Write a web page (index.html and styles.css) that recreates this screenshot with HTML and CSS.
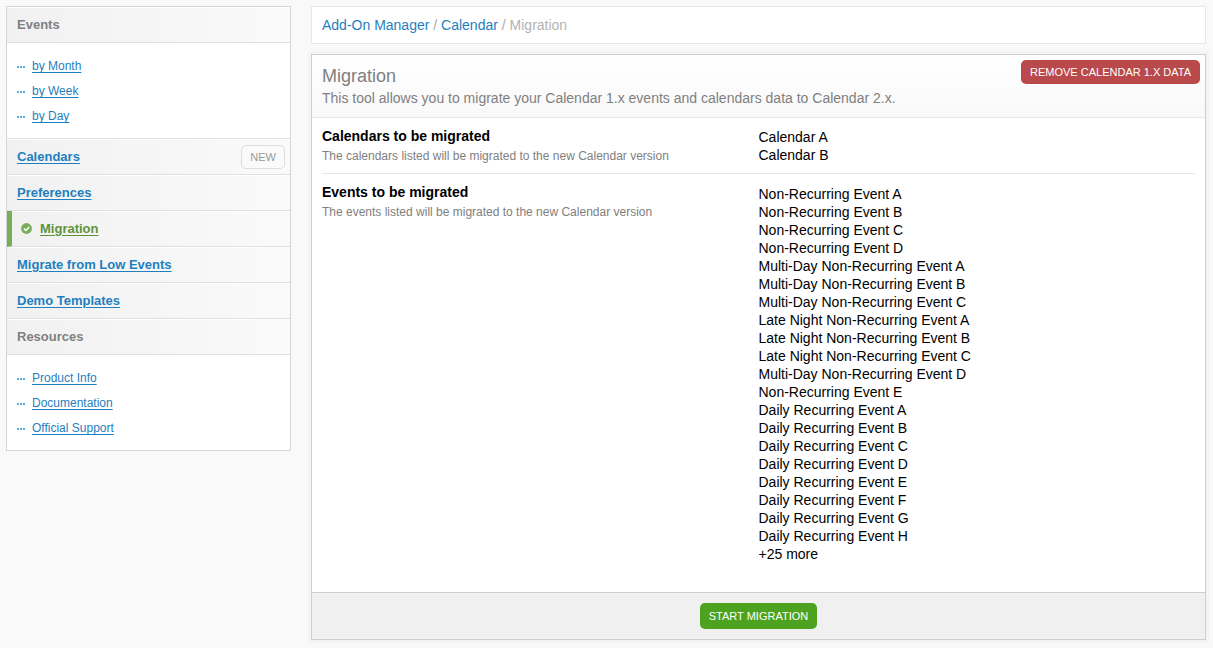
FILE: index.html
```html
<!DOCTYPE html>
<html lang="en">
<head>
<meta charset="utf-8">
<meta name="viewport" content="width=device-width, initial-scale=1">
<title>Migration - Calendar</title>
<link rel="stylesheet" href="styles.css">
</head>
<body>
<div class="layout">
  <nav class="sidebar" aria-label="Calendar">
    <h2 class="side-head">Events</h2>
    <ul class="side-list">
      <li><a href="#">by Month</a></li>
      <li><a href="#">by Week</a></li>
      <li><a href="#">by Day</a></li>
    </ul>
    <h2 class="side-head"><a href="#">Calendars</a><a class="new" href="#">NEW</a></h2>
    <h2 class="side-head"><a href="#">Preferences</a></h2>
    <h2 class="side-head active">
      <svg class="check" viewBox="0 0 11 11" aria-hidden="true"><circle cx="5.5" cy="5.5" r="5.4" fill="#78ae57"/><path d="M3 5.5l1.9 1.9 3.3-3.4" fill="none" stroke="#fff" stroke-width="1.5"/></svg>
      <a href="#" aria-current="page">Migration</a>
    </h2>
    <h2 class="side-head"><a href="#">Migrate from Low Events</a></h2>
    <h2 class="side-head"><a href="#">Demo Templates</a></h2>
    <h2 class="side-head">Resources</h2>
    <ul class="side-list">
      <li><a href="#">Product Info</a></li>
      <li><a href="#">Documentation</a></li>
      <li><a href="#">Official Support</a></li>
    </ul>
  </nav>
  <main class="main">
    <nav class="breadcrumb" aria-label="Breadcrumb"><a href="#">Add-On Manager</a> / <a href="#">Calendar</a> / <span>Migration</span></nav>
    <form class="panel">
      <header class="panel-head">
        <div>
          <h1>Migration</h1>
          <p>This tool allows you to migrate your Calendar 1.x events and calendars data to Calendar 2.x.</p>
        </div>
        <button type="button" class="btn remove">REMOVE CALENDAR 1.X DATA</button>
      </header>
      <div class="rows">
        <section class="row">
          <div>
            <h3>Calendars to be migrated</h3>
            <p>The calendars listed will be migrated to the new Calendar version</p>
          </div>
          <ul class="values">
            <li>Calendar A</li>
            <li>Calendar B</li>
          </ul>
        </section>
        <section class="row last">
          <div>
            <h3>Events to be migrated</h3>
            <p>The events listed will be migrated to the new Calendar version</p>
          </div>
          <ul class="values">
            <li>Non-Recurring Event A</li>
            <li>Non-Recurring Event B</li>
            <li>Non-Recurring Event C</li>
            <li>Non-Recurring Event D</li>
            <li>Multi-Day Non-Recurring Event A</li>
            <li>Multi-Day Non-Recurring Event B</li>
            <li>Multi-Day Non-Recurring Event C</li>
            <li>Late Night Non-Recurring Event A</li>
            <li>Late Night Non-Recurring Event B</li>
            <li>Late Night Non-Recurring Event C</li>
            <li>Multi-Day Non-Recurring Event D</li>
            <li>Non-Recurring Event E</li>
            <li>Daily Recurring Event A</li>
            <li>Daily Recurring Event B</li>
            <li>Daily Recurring Event C</li>
            <li>Daily Recurring Event D</li>
            <li>Daily Recurring Event E</li>
            <li>Daily Recurring Event F</li>
            <li>Daily Recurring Event G</li>
            <li>Daily Recurring Event H</li>
            <li>+25 more</li>
          </ul>
        </section>
      </div>
      <footer class="panel-foot"><button type="button" class="btn start">START MIGRATION</button></footer>
    </form>
  </main>
</div>
</body>
</html>
```
FILE: styles.css
```css
* { box-sizing: border-box; }
body {
  margin: 0;
  background: #f9f9f9;
  color: #000;
  font: 14px/18px "Liberation Sans", Arial, sans-serif;
}
h1, h2, h3, p, ul { margin: 0; padding: 0; }
ul { list-style: none; }
a { color: #1f7fbf; }

.layout {
  display: grid;
  grid-template-columns: 285px minmax(0, 1fr);
  gap: 20px;
  align-items: start;
  padding: 6px 7px 8px 6px;
}

.sidebar { border: 1px solid #d5d5d5; background: #fff; }
.side-head {
  display: flex;
  align-items: center;
  height: 36px;
  padding: 0 5px 0 10px;
  border-bottom: 1px solid #dfdfdf;
  background: linear-gradient(to right, #f1f1f1, #fafafa);
  box-shadow: inset 0 1px #fff;
  color: #808080;
  font-size: 13px;
  font-weight: bold;
}
.side-head a { text-underline-offset: 2px; }
.side-head .new {
  margin-left: auto;
  padding: 2px 8px;
  border: 1px solid #ddd;
  border-radius: 5px;
  background: #fafafa;
  color: #999;
  font-size: 11px;
  font-weight: normal;
  text-decoration: none;
}
.side-head.active { gap: 8px; padding-left: 9px; border-left: 5px solid #78ae57; }
.side-head.active a { color: #5e933e; }
.check { width: 11px; height: 11px; }
.side-list {
  padding: 11px 10px 9px;
  border-bottom: 1px solid #dfdfdf;
  font-size: 12px;
  line-height: 25px;
}
.side-list:last-child { border-bottom: 0; }
.side-list li { display: flex; align-items: center; gap: 6px; }
.side-list li::before {
  content: "";
  width: 9px;
  height: 2px;
  background: repeating-linear-gradient(to right, #5bacdf 0 2px, transparent 2px 3px);
}
.side-list a { text-underline-offset: 2px; }

.main { display: grid; gap: 10px; }
.breadcrumb {
  padding: 9px 10px;
  border: 1px solid #e7e7e7;
  background: #fff;
  color: #aaa;
}
.breadcrumb a { text-decoration: none; }
.breadcrumb span { color: #b3b3b3; }

.panel {
  border: 1px solid #cdcdcd;
  background: #fff;
  box-shadow: 0 0 0 3px #f4f4f4;
}
.panel-head {
  display: flex;
  justify-content: space-between;
  align-items: flex-start;
  padding: 5px 5px 9px 10px;
  border-bottom: 1px solid #e7e7e7;
  background: linear-gradient(#fff, #f9f9f9);
  color: #808080;
}
.panel-head h1 { padding: 4px 0 1px; font-size: 18px; line-height: 24px; font-weight: normal; }
.panel-head p { line-height: 19px; }

.btn {
  border: 0;
  border-radius: 5px;
  padding: 0 9px;
  color: #fff;
  font: 11px/24px "Liberation Sans", Arial, sans-serif;
}
.remove { background: #b9494b; }
.start { background: #4da31f; line-height: 26px; }

.rows { padding: 0 10px; }
.row {
  display: grid;
  grid-template-columns: 1fr 1fr;
  padding: 9px 0 8px;
  border-bottom: 1px solid #e7e7e7;
}
.row.last { padding-bottom: 29px; border-bottom: 0; }
.row h3 { font-size: 14px; }
.row p { padding-top: 2px; color: #808080; font-size: 12px; }
.values { padding-top: 1px; }
.last .values { padding-top: 2px; }

.panel-foot {
  display: flex;
  justify-content: center;
  padding: 10px;
  border-top: 1px solid #cdcdcd;
  background: #f0f0f0;
}
```
